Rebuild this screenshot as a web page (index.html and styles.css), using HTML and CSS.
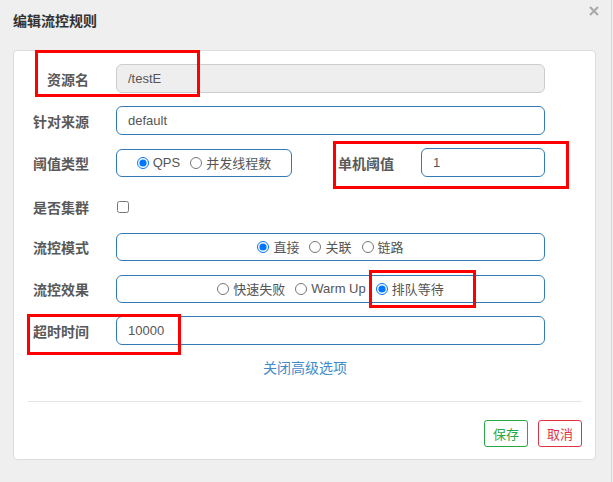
FILE: index.html
```html
<!DOCTYPE html>
<html>
  <head>
    <meta charset="utf-8">
    <link rel="stylesheet" href="styles.css">
  </head>
  <body>
    <div class="dialog">
      <div class="dialog-head">
        <span class="dialog-title">编辑流控规则</span>
        <svg class="close" width="10" height="10" viewBox="0 0 10 10">
          <path d="M1 1 L9 9 M9 1 L1 9" stroke="#aaa" stroke-width="2.2" fill="none"/>
        </svg>
      </div>
      <div class="card">
        <form class="rule-form">
          <div class="row">
            <label class="label">资源名</label>
            <input class="field" type="text" value="/testE" disabled>
          </div>
          <div class="row">
            <label class="label">针对来源</label>
            <input class="field" type="text" value="default">
          </div>
          <div class="row">
            <label class="label">阈值类型</label>
            <div class="choice short">
              <label class="opt"><input type="radio" name="grade" checked>QPS</label>
              <label class="opt"><input type="radio" name="grade">并发线程数</label>
            </div>
            <label class="label side">单机阈值</label>
            <input class="field" type="text" value="1">
          </div>
          <div class="row check-row">
            <label class="label">是否集群</label>
            <input class="check" type="checkbox">
          </div>
          <div class="row">
            <label class="label">流控模式</label>
            <div class="choice">
              <label class="opt"><input type="radio" name="strategy" checked>直接</label>
              <label class="opt"><input type="radio" name="strategy">关联</label>
              <label class="opt"><input type="radio" name="strategy">链路</label>
            </div>
          </div>
          <div class="row">
            <label class="label">流控效果</label>
            <div class="choice">
              <label class="opt"><input type="radio" name="behavior">快速失败</label>
              <label class="opt"><input type="radio" name="behavior">Warm Up</label>
              <label class="opt"><input type="radio" name="behavior" checked>排队等待</label>
            </div>
          </div>
          <div class="row">
            <label class="label">超时时间</label>
            <input class="field" type="text" value="10000">
          </div>
        </form>
        <div class="more"><a href="#">关闭高级选项</a></div>
        <div class="divider"></div>
        <div class="footer">
          <button class="btn btn-save">保存</button>
          <button class="btn btn-cancel">取消</button>
        </div>
      </div>

      <!-- annotation boxes drawn over the form -->
      <div class="mark mark-name"></div>
      <div class="mark mark-count"></div>
      <div class="mark mark-queue"></div>
      <div class="mark mark-timeout"></div>
    </div>
  </body>
</html>
```

FILE: styles.css
```css
body {
  margin: 0;
  padding: 0;
  overflow: hidden;
  background-color: #efefef;
  font-family: "Liberation Sans", "Noto Sans CJK SC", sans-serif;
  font-size: 13px;
  color: #555;
}
.dialog {
  position: relative;
  width: 612px;
  height: 482px;
  box-sizing: border-box;
  border-right: 1px solid #d8d8d8;
}
.dialog-head {
  display: flex;
  justify-content: space-between;
  align-items: flex-start;
  height: 50px;
  padding: 0 12px 0 13px;
}
.dialog-title {
  margin-top: 11px;
  line-height: 20px;
  font-size: 14px;
  font-weight: bold;
  color: #333;
}
.close {
  margin-top: 6px;
}
.card {
  margin: 0 15px 0 13px;
  padding: 13px 13px 12px 14px;
  background: #fff;
  border: 1px solid #dcdcdc;
  border-radius: 4px;
}
.rule-form {
  margin: 0;
  padding-right: 37px;
}
.row {
  display: flex;
  align-items: center;
  height: 29px;
  margin-bottom: 13px;
  box-sizing: border-box;
}
.check-row {
  padding-top: 5px;
}
.label {
  width: 61px;
  margin-right: 27px;
  flex-shrink: 0;
  text-align: right;
  white-space: nowrap;
  font-size: 14px;
  font-weight: bold;
  color: #595959;
}
.label.side {
  width: 56px;
  margin-left: 46px;
}
.field {
  flex: 1;
  min-width: 0;
  height: 29px;
  box-sizing: border-box;
  padding: 0 11px;
  border: 1px solid #337ab7;
  border-radius: 6px;
  font-family: inherit;
  font-size: 13px;
  color: #555;
  outline: none;
}
.field:disabled {
  background: #eee;
  border-color: #ccc;
  color: #555;
}
.choice {
  flex: 1;
  display: flex;
  justify-content: center;
  align-items: center;
  gap: 10px;
  height: 28px;
  box-sizing: border-box;
  border: 1px solid #337ab7;
  border-radius: 6px;
}
.choice.short {
  flex: none;
  width: 176px;
}
.opt {
  display: flex;
  align-items: center;
  color: #555;
  white-space: nowrap;
}
.opt input {
  width: 12px;
  height: 12px;
  margin: 0 4px 0 0;
}
.check {
  width: 12px;
  height: 12px;
  margin: 0 0 0 1px;
}
.more {
  margin-top: 1px;
  text-align: center;
  line-height: 20px;
  font-size: 14px;
}
.more a {
  color: #428bca;
  text-decoration: none;
}
.divider {
  margin: 23px 0 18px;
  border-top: 1px solid #e5e5e5;
}
.footer {
  display: flex;
  justify-content: flex-end;
  gap: 10px;
}
.btn {
  height: 27px;
  padding: 0 8px;
  background: #fff;
  border: 1px solid;
  border-radius: 3px;
  font-family: inherit;
  font-size: 13px;
  cursor: pointer;
}
.btn-save {
  color: #28a745;
  border-color: #28a745;
}
.btn-cancel {
  color: #dc3545;
  border-color: #dc3545;
}
.mark {
  position: absolute;
  box-sizing: border-box;
  border: 3px solid #f00;
}
.mark-name {
  left: 35px;
  top: 50px;
  width: 165px;
  height: 47px;
}
.mark-count {
  left: 333px;
  top: 141px;
  width: 236px;
  height: 48px;
}
.mark-queue {
  left: 369px;
  top: 270px;
  width: 107px;
  height: 38px;
}
.mark-timeout {
  left: 27px;
  top: 314px;
  width: 154px;
  height: 41px;
}
```
